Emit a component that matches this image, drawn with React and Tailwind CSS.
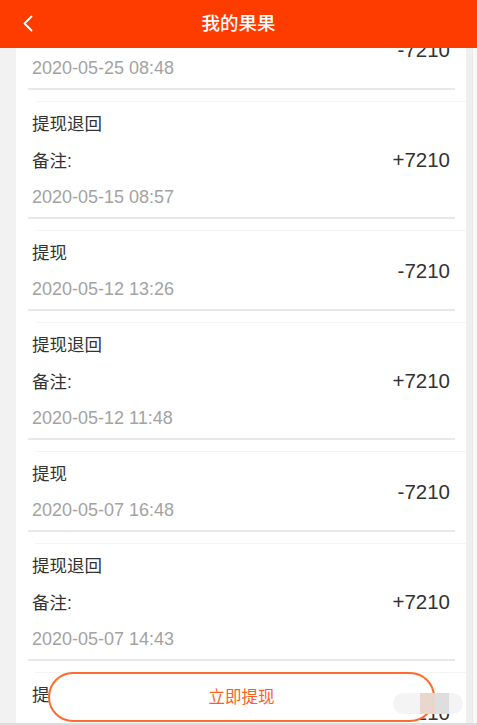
import React from "react";

const items = [
  { title: "提现", amount: "-7210", date: "2020-05-25 08:48" },
  { title: "提现退回", note: true, amount: "+7210", date: "2020-05-15 08:57" },
  { title: "提现", amount: "-7210", date: "2020-05-12 13:26" },
  { title: "提现退回", note: true, amount: "+7210", date: "2020-05-12 11:48" },
  { title: "提现", amount: "-7210", date: "2020-05-07 16:48" },
  { title: "提现退回", note: true, amount: "+7210", date: "2020-05-07 14:43" },
  { title: "提现", amount: "-7210", date: "2020-05-06 10:21" },
  { title: "提现退回", note: true, amount: "+7210", date: "2020-05-06 09:12" },
];

function Item({ item }) {
  return (
    <div>
      <div className="ml-[19px] h-px bg-[#f4f4f4]" />
      <div className="flex items-center justify-between pt-[4px] pl-[16px] pr-[16px]">
        <div className="flex flex-col">
          <div className="flex h-[36.4px] items-center text-[17.5px] text-[#333333]">{item.title}</div>
          {item.note && (
            <div className="flex h-[36.4px] items-center text-[17.5px] text-[#333333]">备注:</div>
          )}
          <div className="flex h-[36.4px] items-center text-[18px] text-[#a3a3a3]">{item.date}</div>
        </div>
        <div className="text-[20.5px] text-[#333333]">{item.amount}</div>
      </div>
      <div className="ml-[12px] mr-[11px] mt-[1.5px] h-[2px] bg-[#e8e8e8]" />
      <div className="h-[11px]" />
    </div>
  );
}

export default function App() {
  return (
    <div
      className="relative flex h-[725px] w-[477px] flex-col overflow-hidden bg-[#f2f2f2]"
      style={{ fontFamily: '"Liberation Sans", "Noto Sans CJK SC", sans-serif' }}
    >
      <div className="relative z-10 flex h-[48px] shrink-0 items-center justify-center bg-[#ff3c00]">
        <svg
          className="absolute left-[22px] top-[15px]"
          width="12"
          height="17"
          viewBox="0 0 12 17"
          fill="none"
        >
          <polyline
            points="9.5,1.5 2.5,8.5 9.5,15.5"
            stroke="white"
            strokeWidth="1.8"
            strokeLinecap="round"
            strokeLinejoin="round"
          />
        </svg>
        <span className="text-[18.5px] font-medium text-white">我的果果</span>
      </div>
      <div className="flex min-h-0 flex-1">
        <div className="w-[16px] shrink-0" />
        <div className="min-h-0 w-[450px] shrink-0 overflow-hidden bg-white">
          <div className="-mt-[39px]">
            {items.map((it, i) => (
              <Item key={i} item={it} />
            ))}
          </div>
        </div>
        <div className="w-[6px] shrink-0 bg-[#efefef]" />
        <div className="flex-1 border-l border-[#e9e9e9] bg-[#f8f8f8]" />
      </div>
      <div className="absolute bottom-0 left-0 right-0 h-[2px] bg-[#dcdcdc]" />
      <button className="absolute left-[48px] top-[672px] flex h-[50px] w-[387px] items-center justify-center rounded-full border-2 border-[#ff6a2e] bg-white text-[16.5px] text-[#ff5e1f]">
        立即提现
      </button>
      <div className="absolute left-[393px] top-[693px] flex h-[21px] w-[70px] items-center overflow-hidden rounded-full bg-[#f3f3f3]/90">
        <div className="ml-[27px] h-full w-[15px] bg-[#e8d6cf]" />
        <div className="h-full w-[14px] bg-[#dedede]" />
      </div>
    </div>
  );
}
